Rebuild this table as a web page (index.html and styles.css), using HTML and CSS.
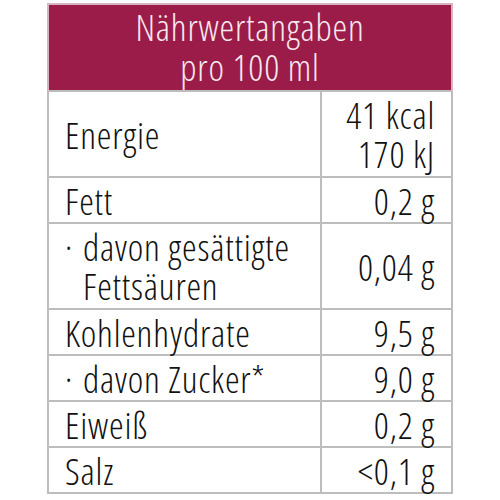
FILE: index.html
```html
<!DOCTYPE html>
<html lang="de">
<head>
    <meta charset="UTF-8">
    <title>Nährwertangaben</title>
    <link rel="stylesheet" href="styles.css">
</head>
<body>
    <!-- Nährwerttabelle -->
    <table class="nutrition">
        <thead>
            <tr class="head-row">
                <th colspan="2" class="head">Nährwertangaben<br>pro 100 ml</th>
            </tr>
        </thead>
        <tbody>
            <tr class="tall">
                <td class="name">Energie</td>
                <td class="value">41 kcal<br>170 kJ</td>
            </tr>
            <tr>
                <td class="name">Fett</td>
                <td class="value">0,2 g</td>
            </tr>
            <tr class="tall">
                <td class="name">
                    <div class="sub">
                        <span class="dot">·</span>
                        <span class="sub-text">davon gesättigte Fettsäuren</span>
                    </div>
                </td>
                <td class="value">0,04 g</td>
            </tr>
            <tr>
                <td class="name">Kohlenhydrate</td>
                <td class="value">9,5 g</td>
            </tr>
            <tr>
                <td class="name">
                    <div class="sub">
                        <span class="dot">·</span>
                        <span class="sub-text">davon Zucker*</span>
                    </div>
                </td>
                <td class="value">9,0 g</td>
            </tr>
            <tr>
                <td class="name">Eiweiß</td>
                <td class="value">0,2 g</td>
            </tr>
            <tr>
                <td class="name">Salz</td>
                <td class="value">&lt;0,1 g</td>
            </tr>
        </tbody>
    </table>
</body>
</html>
```

FILE: styles.css
```css
/* Общие стили */
body {
    margin: 0;
    padding: 3px 0 0 47px;
    background-color: #ffffff;
    font-family: "Open Sans", "DejaVu Sans", sans-serif;
    font-stretch: 75%;
    font-weight: 350;
    color: #111111;
}
/* Таблица */
.nutrition {
    width: 406px;
    border-collapse: collapse;
    font-size: 37px;
    line-height: 39px;
    letter-spacing: 0.8px;
}
.nutrition tr {
    height: 46px;
}
.nutrition td {
    border: 2px solid #bdbdbd;
    padding: 0;
}
/* Заголовок */
.nutrition .head-row {
    height: 87px;
}
.head {
    background-color: #9b1c48;
    color: #f6e8ee;
    font-weight: 350;
    text-align: center;
    line-height: 40px;
    padding: 2px 0 0 0;
    border: 2px solid #d8b3c2;
    border-bottom: none;
    vertical-align: top;
}
.nutrition .tall {
    height: 86px;
}
.name {
    width: 255px;
    padding-left: 16px !important;
    vertical-align: middle;
}
.value {
    text-align: right;
    padding-right: 16px !important;
    vertical-align: middle;
}
/* Подпункты */
.sub {
    display: flex;
}
.dot {
    width: 18px;
    flex-shrink: 0;
}
.sub-text {
    width: 225px;
}
```
